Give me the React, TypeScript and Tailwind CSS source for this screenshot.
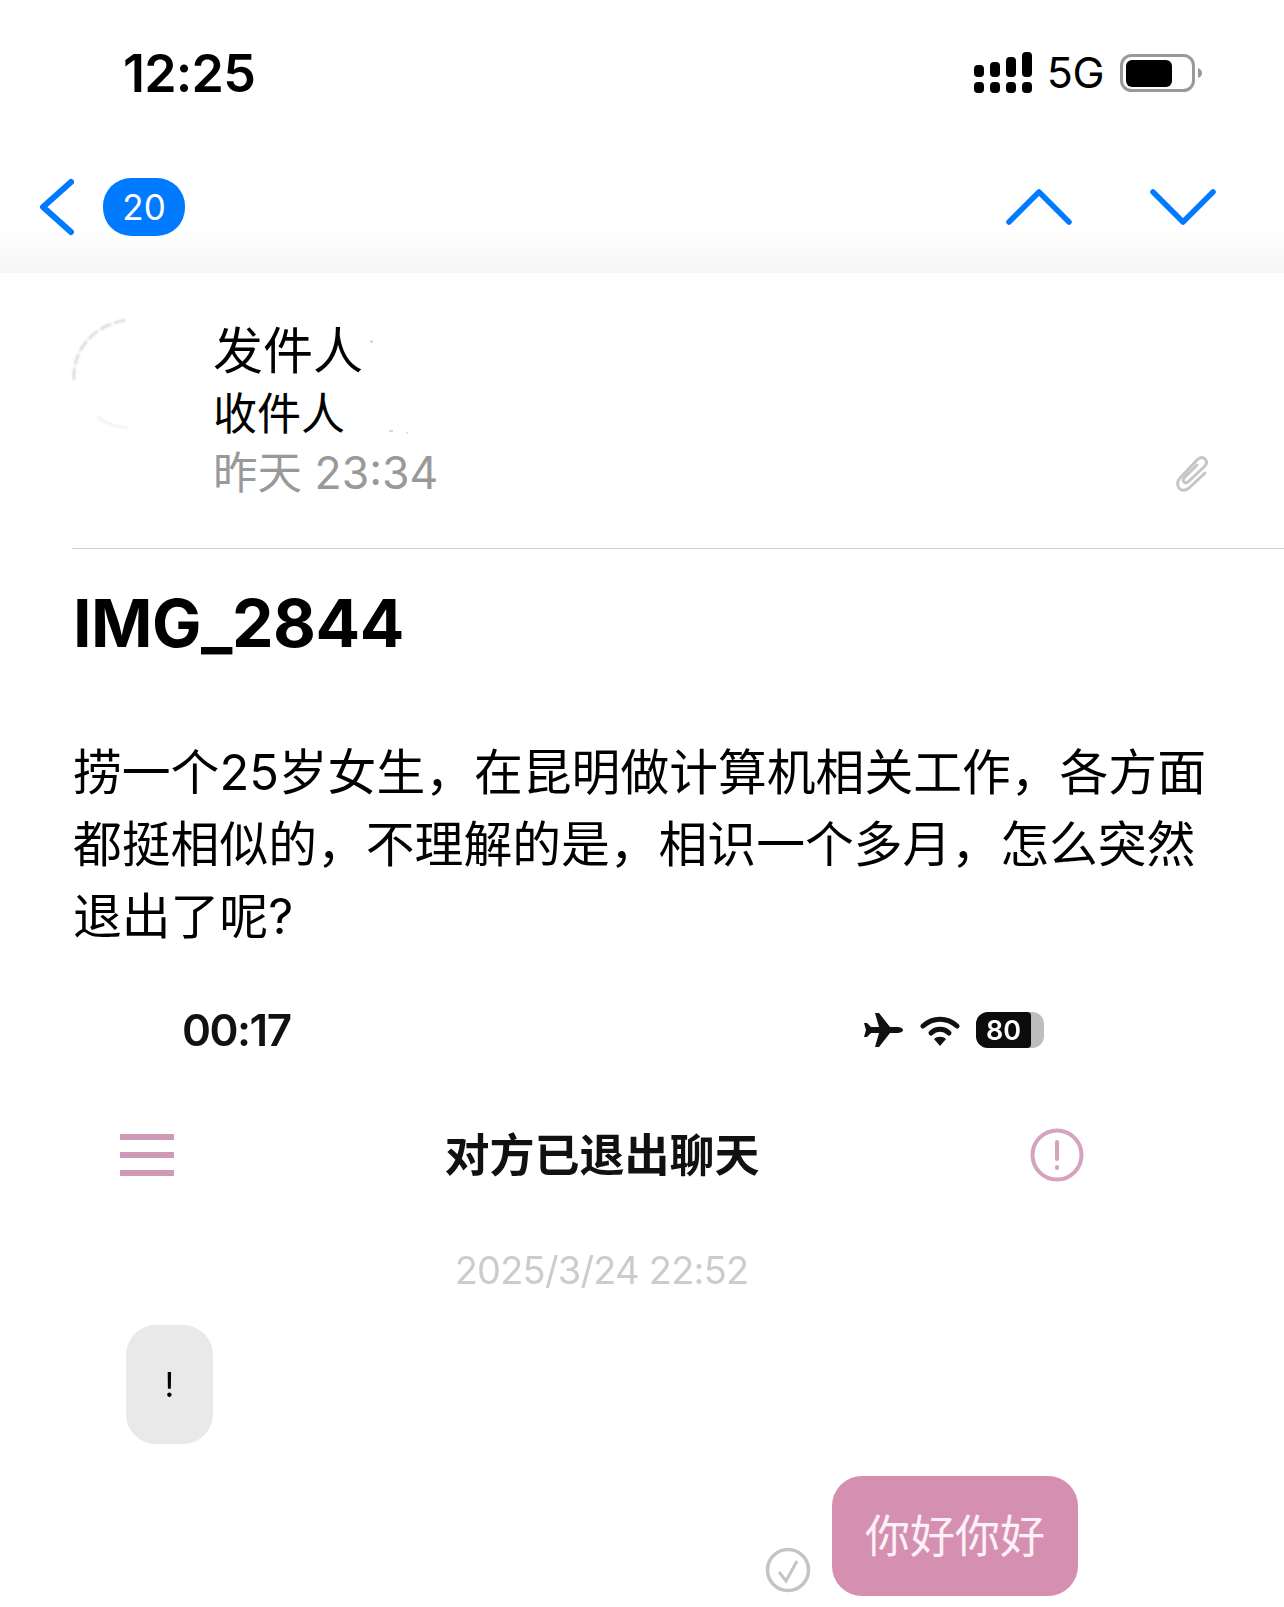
const sans = "font-['Inter','Noto_Sans_CJK_SC',sans-serif]";

function SignalIcon() {
  const bars = [
    [0, 13],
    [16, 10],
    [32, 5],
    [48, 0],
  ];
  return (
    <svg width="58" height="41" viewBox="0 0 58 41" fill="#000">
      {bars.map(([x, y]) => (
        <g key={x}>
          <rect x={x} y={y} width="10" height={25 - y} rx="4" />
          <rect x={x} y="30" width="10" height="11" rx="4" />
        </g>
      ))}
    </svg>
  );
}

function BatteryIcon() {
  return (
    <svg width="82" height="38" viewBox="0 0 82 38">
      <rect x="1.5" y="1.5" width="72" height="35" rx="10" fill="none" stroke="#999" strokeWidth="3" />
      <rect x="6" y="6" width="46" height="27" rx="6" fill="#000" />
      <path d="M78 14c3 1 4 3 4 5s-1 4-4 5z" fill="#999" />
    </svg>
  );
}

function Chevron({ d, width, height, stroke = 5.5 }: { d: string; width: number; height: number; stroke?: number }) {
  return (
    <svg width={width} height={height} viewBox={`0 0 ${width} ${height}`} fill="none" stroke="#007aff" strokeWidth={stroke} strokeLinecap="round" strokeLinejoin="round">
      <path d={d} />
    </svg>
  );
}

function Header() {
  return (
    <header className="bg-linear-to-b from-white from-[84%] to-[#f5f5f5] h-[273px]">
      <div className="flex h-[148px] items-center justify-between pl-[123px] pr-[82px]">
        <span className="text-[52px] leading-none font-semibold tracking-[-0.8px] text-black">12:25</span>
        <div className="mb-[3px] flex items-center">
          <SignalIcon />
          <span className="ml-[15px] text-[43px] leading-none font-normal tracking-[-0.5px] text-black">5G</span>
          <span className="ml-[16px]">
            <BatteryIcon />
          </span>
        </div>
      </div>
      <div className="flex h-[118px] items-center justify-between pl-[40px] pr-[68px]">
        <div className="flex items-center gap-[29px]">
          <Chevron d="M31 4 3 29l28 25" width={34} height={58} stroke={6} />
          <span className="flex h-[58px] w-[82px] items-center justify-center rounded-[28px] bg-[#007aff] text-[35px] leading-none text-white">
            20
          </span>
        </div>
        <div className="flex items-center gap-[78px]">
          <Chevron d="M3 33 33 3l30 30" width={66} height={36} />
          <Chevron d="M3 3l30 30L63 3" width={66} height={36} />
        </div>
      </div>
    </header>
  );
}

function Avatar() {
  return (
    <svg width="112" height="112" viewBox="0 0 112 112" fill="none" className="shrink-0 blur-[0.8px]">
      <path d="M2 62C0 34 20 6 56 2" stroke="#b9bfcc" strokeWidth="2" strokeDasharray="12 3" opacity="0.75" />
      <path d="M24 98c10 8 20 11 32 12" stroke="#d8dbe2" strokeWidth="1.5" opacity="0.7" />
    </svg>
  );
}

function Paperclip() {
  return (
    <svg width="34" height="38" viewBox="0 0 34 38" fill="none" stroke="#c6c6c6" strokeWidth="3" strokeLinecap="round" strokeLinejoin="round">
      <path d="M30 19 14 34c-4 3-8 3-10 0s-2-7 1-10L22 6c3-3 6-3 8-1s2 5-1 8L14 27c-2 2-4 2-5 1s-1-3 1-5l12-12" />
    </svg>
  );
}

function SenderBlock() {
  return (
    <section className="ml-[72px] flex h-[276px] border-b border-[#cfcfcf] pt-[45px]">
      <Avatar />
      <div className="ml-[29px] flex flex-1 flex-col pr-[75px]">
        <div className="text-[50px] leading-[66px] text-black">
          发件人
          <span className="ml-[7px] inline-block h-[3px] w-[3px] rounded-full bg-[#d5d5d5] align-[26px]" />
        </div>
        <div className="text-[44px] leading-[60px] text-black">
          收件人
          <span className="ml-[44px] inline-block h-[2px] w-[4px] bg-[#bfe0f7] align-[-2px]" />
          <span className="ml-[13px] inline-block h-[2px] w-[2px] bg-[#cfe6f7] align-[-4px]" />
        </div>
        <div className="flex h-[58px] items-center justify-between">
          <span className="text-[44.5px] leading-none text-[#999999]">昨天 23:34</span>
          <Paperclip />
        </div>
      </div>
    </section>
  );
}

function Message() {
  return (
    <section className="pl-[73px]">
      <h1 className="mt-[30px] text-[66px] leading-[88px] font-bold tracking-[-0.5px] text-black">IMG_2844</h1>
      <div className="mt-[70px] text-[48.8px] leading-[71.8px] text-black">
        <p>捞一个25岁女生，在昆明做计算机相关工作，各方面</p>
        <p>都挺相似的，不理解的是，相识一个多月，怎么突然</p>
        <p>退出了呢?</p>
      </div>
    </section>
  );
}

function ChatStatus() {
  return (
    <div className="flex h-[60px] items-center justify-between pl-[62px] pr-[88px]">
      <span className="text-[44px] leading-none font-semibold tracking-[-1.5px] text-[#111]">00:17</span>
      <div className="flex items-center gap-[16px]">
        <svg width="40" height="34" viewBox="0 0 40 34" fill="#111">
          <path d="M39 17c0-2-3-3-6-3h-7L15 0h-4l4 14H7L3 10H0l2 7-2 7h3l4-4h8l-4 14h4l11-14h7c3 0 6-1 6-3z" />
        </svg>
        <svg width="40" height="31" viewBox="0 0 40 31" fill="none" stroke="#111" strokeWidth="5" strokeLinecap="round">
          <path d="M3 11c10-9 24-9 34 0" />
          <path d="M11 18c5-5 13-5 18 0" />
          <path d="M20 31l-6-7c3-3 9-3 12 0z" fill="#111" stroke="none" />
        </svg>
        <span className="flex h-[36px] w-[68px] overflow-hidden rounded-[12px] bg-[#bdbdbd]">
          <span className="flex h-full w-[55px] items-center justify-center rounded-r-[4px] bg-[#0c0c0c] text-[27px] leading-none font-semibold text-white">
            80
          </span>
        </span>
      </div>
    </div>
  );
}

function ChatTopBar() {
  return (
    <div className="mt-[68px] flex h-[54px] items-center justify-between pr-[48px]">
      <div className="flex w-[54px] flex-col gap-[12px]">
        <span className="h-[6px] bg-[#cf9ab8]" />
        <span className="h-[6px] bg-[#cf9ab8]" />
        <span className="h-[6px] bg-[#cf9ab8]" />
      </div>
      <span className="text-[45px] leading-none font-semibold text-[#111]">对方已退出聊天</span>
      <svg width="54" height="54" viewBox="0 0 54 54" fill="none" stroke="#d6a3bf" strokeWidth="4" strokeLinecap="round">
        <circle cx="27" cy="27" r="24.5" />
        <path d="M27 14v17" />
        <path d="M27 39v1" />
      </svg>
    </div>
  );
}

function ChatImage() {
  return (
    <section className="blur-[0.7px]">
      <div className="mt-[48px] ml-[120px] w-[1012px]">
        <ChatStatus />
        <ChatTopBar />
        <div className="mt-[63px] mr-[49px] text-center text-[38px] leading-[50px] tracking-[-0.8px] text-[#cccccc]">2025/3/24 22:52</div>
        <div className="mt-[30px] ml-[6px] flex h-[119px] w-[87px] items-center justify-center rounded-[30px] bg-[#e9e9e9] text-[34px] leading-none text-black">
          !
        </div>
        <div className="mt-[32px] flex justify-end pr-[54px]">
          <svg width="46" height="46" viewBox="0 0 46 46" fill="none" stroke="#c4c4c4" strokeWidth="3.5" className="mt-[71px] mr-[21px]">
            <circle cx="23" cy="23" r="20.5" />
            <path d="m14 25 7 9 11-20" strokeWidth="3" />
          </svg>
          <div className="flex h-[120px] w-[246px] items-center justify-center rounded-[30px] bg-[#d58fb0] text-[45px] leading-none text-[#fdf1f6]">
            你好你好
          </div>
        </div>
      </div>
    </section>
  );
}

export default function App() {
  return (
    <div className={`h-[1607px] w-[1284px] overflow-hidden bg-white ${sans}`}>
      <Header />
      <SenderBlock />
      <Message />
      <ChatImage />
    </div>
  );
}
